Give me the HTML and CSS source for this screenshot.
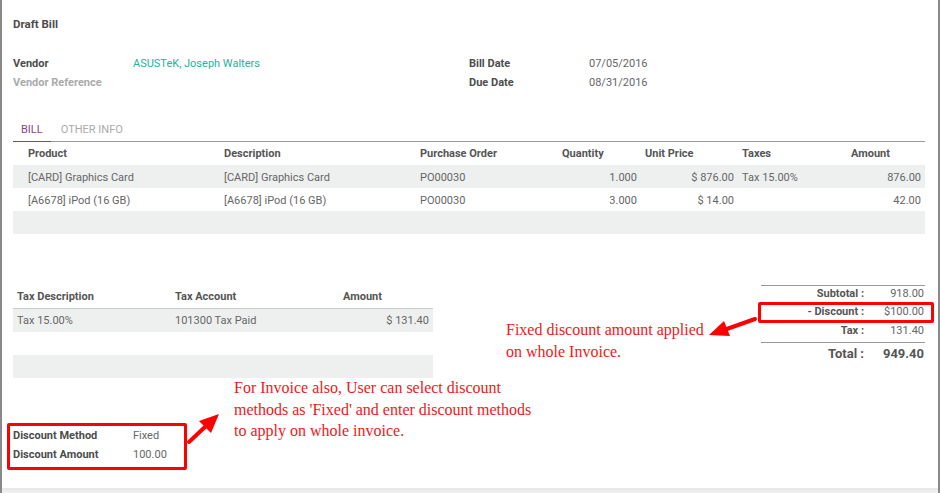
FILE: index.html
```html
<!DOCTYPE html>
<html>
<head>
<meta charset="utf-8">
<link rel="stylesheet" href="styles.css">
</head>
<body>
<div class="page">
  <div class="title">Draft Bill</div>

  <div class="group">
    <div class="col">
      <div class="field"><span class="lbl">Vendor</span><span class="val link">ASUSTeK, Joseph Walters</span></div>
      <div class="field"><span class="lbl muted">Vendor Reference</span><span class="val"></span></div>
    </div>
    <div class="col">
      <div class="field"><span class="lbl">Bill Date</span><span class="val">07/05/2016</span></div>
      <div class="field"><span class="lbl">Due Date</span><span class="val">08/31/2016</span></div>
    </div>
  </div>

  <div class="tabs">
    <div class="tab active">BILL</div>
    <div class="tab">OTHER INFO</div>
  </div>

  <div class="lines">
    <div class="lrow head">
      <div></div><div>Product</div><div>Description</div><div>Purchase Order</div><div>Quantity</div><div>Unit Price</div><div>Taxes</div><div>Amount</div>
    </div>
    <div class="lrow shade">
      <div></div><div>[CARD] Graphics Card</div><div>[CARD] Graphics Card</div><div>PO00030</div><div class="num">1.000</div><div class="num">$ 876.00</div><div>Tax 15.00%</div><div class="num">876.00</div>
    </div>
    <div class="lrow">
      <div></div><div>[A6678] iPod (16 GB)</div><div>[A6678] iPod (16 GB)</div><div>PO00030</div><div class="num">3.000</div><div class="num">$ 14.00</div><div></div><div class="num">42.00</div>
    </div>
    <div class="lrow shade"></div>
  </div>

  <div class="lower">
    <div class="taxes">
      <div class="trow thead"><div>Tax Description</div><div>Tax Account</div><div>Amount</div></div>
      <div class="trow shade"><div>Tax 15.00%</div><div>101300 Tax Paid</div><div class="num">$ 131.40</div></div>
      <div class="trow"></div>
      <div class="trow shade"></div>
    </div>
    <div class="totals">
      <div class="srow first"><span class="sl">Subtotal :</span><span class="sv">918.00</span></div>
      <div class="srow"><span class="sl">- Discount :</span><span class="sv">$100.00</span></div>
      <div class="srow"><span class="sl">Tax :</span><span class="sv">131.40</span></div>
      <div class="srow grand"><span class="sl">Total :</span><span class="sv">949.40</span></div>
    </div>
  </div>

  <div class="disc">
    <div class="field"><span class="lbl">Discount Method</span><span class="val">Fixed</span></div>
    <div class="field"><span class="lbl">Discount Amount</span><span class="val">100.00</span></div>
  </div>

  <div class="foot"></div>

  <div class="redbox box-total"></div>
  <div class="redbox box-disc"></div>
  <div class="note note1">Fixed discount amount applied<br>on whole Invoice.</div>
  <div class="note note2">For Invoice also, User can select discount<br>methods as 'Fixed' and enter discount methods<br>to apply on whole invoice.</div>
  <svg class="arrows" width="940" height="493" viewBox="0 0 940 493">
    <line x1="755" y1="319" x2="724" y2="330" stroke="#f00" stroke-width="4" stroke-linecap="round"/>
    <polygon points="709,335 724,321 730,336" fill="#f00"/>
    <line x1="189" y1="442" x2="206" y2="426" stroke="#f00" stroke-width="4" stroke-linecap="round"/>
    <polygon points="219,414 199,421 211,433" fill="#f00"/>
  </svg>
</div>
</body>
</html>
```

FILE: styles.css
```css
* { box-sizing: border-box; }
html, body { margin: 0; padding: 0; background: #fff; }
body {
  font-family: Roboto, "Liberation Sans", sans-serif;
  font-size: 11px;
  color: #666;
}
.page {
  position: relative;
  width: 940px;
  height: 493px;
  border-left: 2px solid #8a8a8a;
  border-right: 2px solid #8a8a8a;
  padding: 17px 13px 0 11px;
  overflow: hidden;
}
.title {
  font-weight: 700;
  font-size: 11.5px;
  color: #4c4c4c;
  line-height: 14px;
  height: 14px;
}
.group {
  display: flex;
  margin-top: 23px;
}
.col { width: 456px; }
.field {
  display: flex;
  height: 19px;
  line-height: 19px;
}
.lbl {
  width: 120px;
  font-weight: 700;
  color: #4c4c4c;
}
.lbl.muted { color: #aaa; }
.val { color: #666; }
.link { color: #22b49c; }

.tabs {
  display: flex;
  margin-top: 25px;
  height: 25px;
  border-bottom: 1px solid #999;
}
.tab {
  padding: 0 8px;
  line-height: 25px;
  height: 25px;
  color: #aaa;
  text-transform: uppercase;
}
.tab + .tab { margin-left: 2px; }
.tab.active {
  color: #8c3f83;
  border-bottom: 1px solid #8c3f83;
}

.lrow {
  display: grid;
  grid-template-columns: 11px 196px 196px 142px 83px 97px 109px 78px;
  height: 23px;
  line-height: 23px;
}
.lrow > div { padding: 0 4px; white-space: nowrap; }
.lrow.head { font-weight: 700; color: #555; }
.lrow.shade > div, .lrow:not(.head) > div { padding-top: 1px; }
.shade { background: #eef0f0; }
.num { text-align: right; }

.lower {
  display: flex;
  justify-content: space-between;
  margin-top: 51px;
}
.taxes { width: 420px; }
.trow {
  display: grid;
  grid-template-columns: 158px 168px 94px;
  height: 23px;
  line-height: 23px;
}
.trow > div { padding: 0 4px; }
.trow.thead {
  font-weight: 700;
  color: #555;
  height: 24px;
  border-bottom: 1px solid #ccc;
}
.totals {
  width: 164px;
  border-top: 1px solid #999;
}
.srow {
  display: flex;
  height: 19px;
  line-height: 19px;
}
.srow.first { height: 16px; line-height: 16px; }
.sl {
  width: 107px;
  text-align: right;
  padding-right: 4px;
  font-weight: 700;
  color: #555;
}
.sv {
  flex: 1;
  text-align: right;
  padding-right: 1px;
}
.srow.grand {
  margin-top: 2px;
  border-top: 1px solid #999;
  height: 23px;
  line-height: 22px;
  font-size: 13px;
}
.srow.grand .sv { font-weight: 700; color: #555; }

.disc {
  margin-top: 48px;
}
.foot {
  position: absolute;
  left: 0;
  right: 0;
  bottom: 0;
  height: 5px;
  background: linear-gradient(#e6e6e6, #f2f2f2);
}

.redbox {
  position: absolute;
  border: 3px solid #f00;
  border-radius: 2px;
}
.box-total { left: 756px; top: 302px; width: 176px; height: 21px; }
.box-disc { left: 5px; top: 423px; width: 180px; height: 47px; }

.note {
  position: absolute;
  font-family: "Liberation Serif", "Times New Roman", serif;
  font-size: 16px;
  line-height: 21.5px;
  color: #f01818;
  white-space: nowrap;
}
.note1 { left: 504px; top: 319px; }
.note2 { left: 232px; top: 377px; }
.arrows { position: absolute; left: -2px; top: 0; pointer-events: none; }
```
